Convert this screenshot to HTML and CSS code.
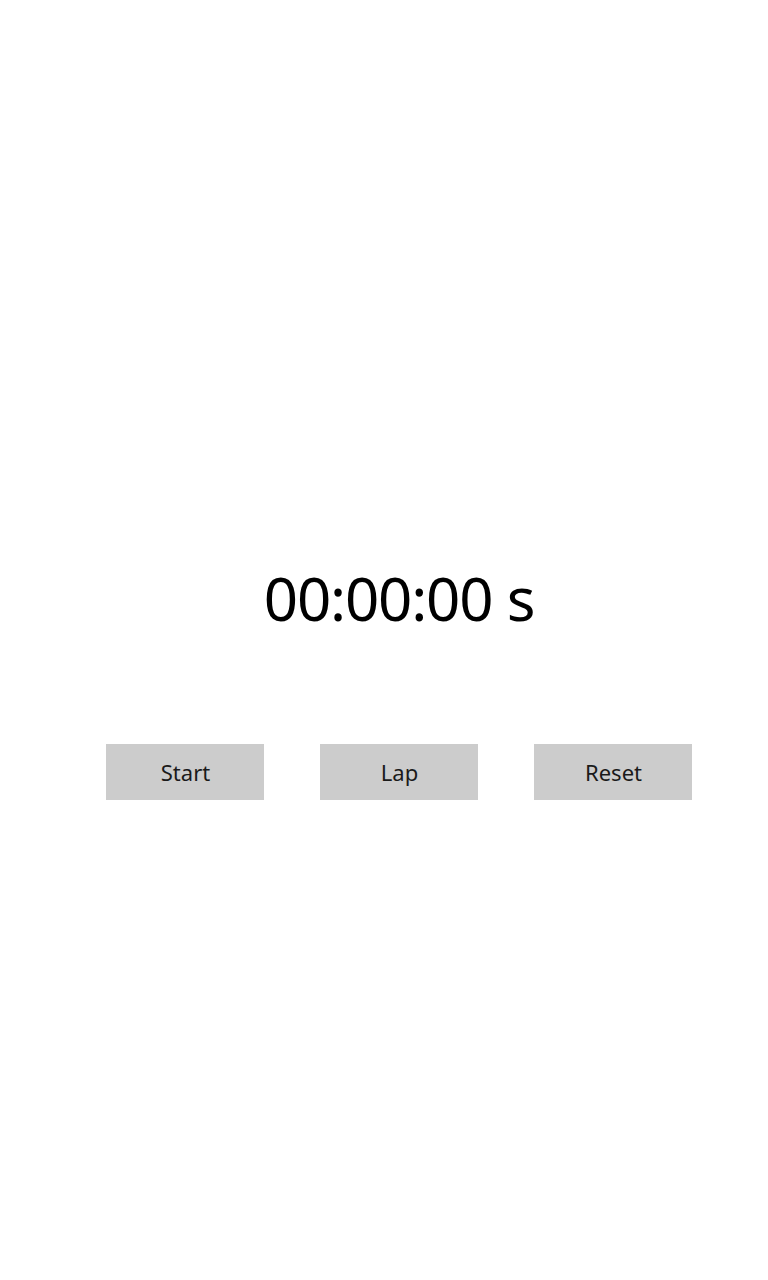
FILE: index.html
```html
<!DOCTYPE html>
<html lang="en">
<head>
  <meta charset="UTF-8">
  <meta name="viewport" content="width=device-width, initial-scale=1.0">
  <title>Stopwatch</title>
  <link rel="stylesheet" href="styles.css">
</head>
<body>
  <div class="stopwatch">
    <div class="time" id="timeVal">00:00:00 s</div>
    <div class="controls">
      <button id="button__start">Start</button>
      <button id="button__lap">Lap</button>
      <button id="button__reset">Reset</button>
    </div>
  </div>
</body>
</html>
```

FILE: styles.css
```css
body {
  margin: 0;
  background: #ffffff;
  font-family: "Noto Sans", "Open Sans", sans-serif;
  color: #000000;
}
.stopwatch {
  padding: 563px 76px 0 106px;
}
.time {
  text-align: center;
  font-size: 60px;
  letter-spacing: -1.2px;
  line-height: 70px;
}
.controls {
  display: flex;
  justify-content: space-between;
  margin-top: 111px;
}
button {
  width: 158px;
  height: 56px;
  background: #cccccc;
  color: #1a1a1a;
  border: none;
  font-family: "Noto Sans", "Open Sans", sans-serif;
  font-size: 22px;
  padding: 0 0 0 1px;
}
```
